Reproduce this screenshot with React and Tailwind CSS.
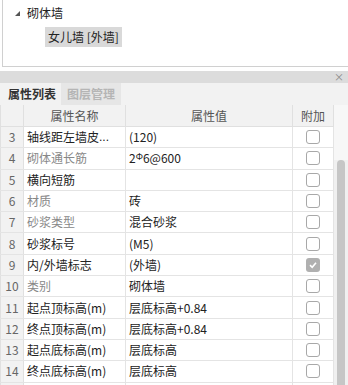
import React from 'react';

const rows = [
  { n: 3, name: '轴线距左墙皮', more: true, val: '(120)', dim: false },
  { n: 4, name: '砌体通长筋', val: 'rebar', dim: true },
  { n: 5, name: '横向短筋', val: '', dim: false },
  { n: 6, name: '材质', val: '砖', dim: true },
  { n: 7, name: '砂浆类型', val: '混合砂浆', dim: true },
  { n: 8, name: '砂浆标号', val: '(M5)', dim: false },
  { n: 9, name: '内/外墙标志', val: '(外墙)', dim: false, checked: true },
  { n: 10, name: '类别', val: '砌体墙', dim: true },
  { n: 11, name: '起点顶标高(m)', val: '层底标高+0.84', dim: false },
  { n: 12, name: '终点顶标高(m)', val: '层底标高+0.84', dim: false },
  { n: 13, name: '起点底标高(m)', val: '层底标高', dim: false },
  { n: 14, name: '终点底标高(m)', val: '层底标高', dim: false },
  { n: '', name: '', val: '', dim: false, blank: true },
];

function Check({ checked }) {
  if (checked) {
    return (
      <div className="w-[14px] h-[14px] rounded-[3px] bg-[#b0b0b0] flex items-center justify-center">
        <svg width="10" height="10" viewBox="0 0 10 10">
          <path d="M2 5.2 L4.2 7.3 L8 2.8" stroke="#fff" strokeWidth="1.6" fill="none" />
        </svg>
      </div>
    );
  }
  return <div className="w-[14px] h-[14px] rounded-[3px] border border-[#a8a8a8] bg-white" />;
}

export default function App() {
  return (
    <div className="w-[348px] h-[385px] overflow-hidden bg-white text-[12px] text-[#222]" style={{ fontFamily: '"Noto Sans CJK SC", "Noto Sans", sans-serif' }}>
      {/* 构件树 */}
      <div className="h-[67px] ml-[2px] border-l border-b border-[#d0d0d0] pt-[4px]">
        <div className="flex items-center h-[18px] pl-[11px]">
          <svg width="7" height="7" viewBox="0 0 7 7" className="mr-[6px]">
            <path d="M6 1 L6 6 L1 6 Z" fill="#555" />
          </svg>
          <span>砌体墙</span>
        </div>
        <div className="pl-[42px] mt-[5px]">
          <span className="inline-block bg-[#d9d9d9] px-[3px] h-[20px] leading-[20px]">女儿墙 [外墙]</span>
        </div>
      </div>

      <div className="h-[4px]" />

      {/* 标题栏 */}
      <div className="h-[12px] bg-[#dcdcdc] flex items-center justify-end pr-[4px]">
        <span className="text-[10px] leading-none text-[#888]">×</span>
      </div>

      {/* 页签 */}
      <div className="h-[22px] bg-[#f2f2f2] flex items-stretch pl-[3px]">
        <div className="px-[5px] flex items-center font-bold text-[#333]">属性列表</div>
        <div className="px-[6px] flex items-center bg-[#e6e6e6] text-[#b5b5b5] font-bold">图层管理</div>
      </div>

      {/* 属性表 */}
      <div className="flex">
        <div className="w-[334px]">
          <div className="flex h-[22px] bg-[#f2f2f2] border-b border-[#e0e0e0] text-[#555]">
            <div className="w-[24px] border-l border-r border-[#e0e0e0]" />
            <div className="w-[102px] border-r border-[#e0e0e0] flex items-center justify-center">属性名称</div>
            <div className="w-[167px] border-r border-[#e0e0e0] flex items-center justify-center">属性值</div>
            <div className="w-[41px] border-r border-[#e0e0e0] flex items-center justify-center">附加</div>
          </div>
          {rows.map((r, i) => (
            <div key={i} className="flex h-[21.3px] border-b border-[#e4e4e4]">
              <div className="w-[24px] bg-[#f2f2f2] border-l border-r border-[#e0e0e0] flex items-center justify-center text-[#666]">{r.n}</div>
              <div className={`w-[102px] border-r border-[#e4e4e4] flex items-center pl-[3px] whitespace-nowrap ${r.dim ? 'text-[#888]' : 'text-[#222]'}`}>
                {r.name}
                {r.more && <span style={{ fontFamily: '"Liberation Sans", sans-serif' }}>...</span>}
              </div>
              <div className="w-[167px] border-r border-[#e4e4e4] flex items-center pl-[3px] whitespace-nowrap">
                {r.val === 'rebar' ? (
                  <span>2<span className="text-[9px] relative top-[-3px]">Φ</span>6@600</span>
                ) : r.val}
              </div>
              <div className="w-[41px] border-r border-[#e4e4e4] flex items-center justify-center">
                {!r.blank && <Check checked={r.checked} />}
              </div>
            </div>
          ))}
        </div>
        {/* 滚动条 */}
        <div className="w-[14px] bg-[#f7f7f7] flex flex-col">
          <div className="h-[55px]" />
          <div className="flex-1 bg-[#f0f0f0] flex justify-center">
            <div className="w-[8px] bg-[#c6c6c6] rounded-t-[4px]" />
          </div>
        </div>
      </div>
    </div>
  );
}
